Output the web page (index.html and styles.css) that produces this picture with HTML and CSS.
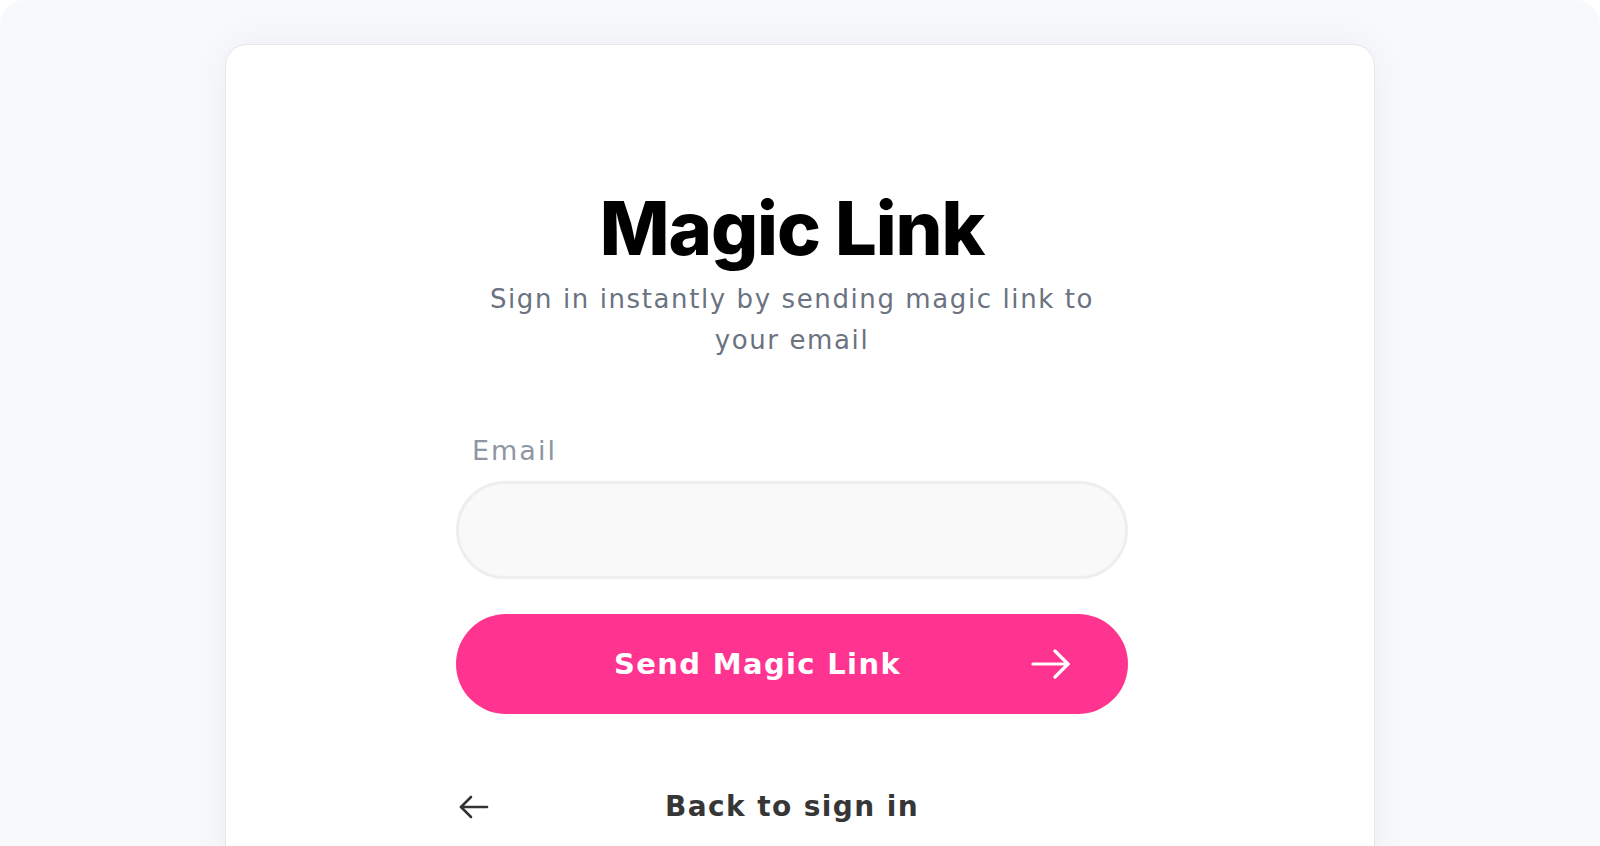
FILE: index.html
```html
<!DOCTYPE html>
<html lang="en">
<head>
    <meta charset="UTF-8">
    <meta name="viewport" content="width=device-width, initial-scale=1.0">
    <title>Magic Link</title>
    <link rel="stylesheet" href="styles.css">
</head>
<body>
    <div class="frame">
        <main class="card">
            <div class="form">
                <h1 class="title">Magic Link</h1>
                <p class="subtitle">Sign in instantly by sending magic link to<br>your email</p>

                <label class="label" for="email">Email</label>
                <input class="input" id="email" type="email">

                <button class="btn" type="button">
                    <span class="btn-text">Send Magic Link</span>
                    <svg class="btn-arrow" width="40" height="30" viewBox="0 0 40 30" fill="none" stroke="#fff" stroke-width="3.2" stroke-linecap="round" stroke-linejoin="round">
                        <path d="M2 15H37"/>
                        <path d="M24 2L37 15L24 28"/>
                    </svg>
                </button>

                <a class="back" href="#">
                    <svg class="back-arrow" width="30" height="24" viewBox="0 0 30 24" fill="none" stroke="#333" stroke-width="2.6" stroke-linecap="round" stroke-linejoin="round">
                        <path d="M28 12H2"/>
                        <path d="M12 2L2 12L12 22"/>
                    </svg>
                    <span class="back-text">Back to sign in</span>
                    <span></span>
                </a>
            </div>
        </main>
    </div>
</body>
</html>
```

FILE: styles.css
```css
html, body {
    margin: 0;
    padding: 0;
    height: 100%;
    overflow: hidden;
    background-color: #fff;
}
body {
    font-family: "DejaVu Sans", Verdana, sans-serif;
}
.frame {
    background-color: #f8f9fb;
    border-radius: 24px;
    height: 1200px;
    padding-top: 44px;
    box-sizing: border-box;
    display: flex;
    justify-content: center;
}
.card {
    width: 1150px;
    height: 1100px;
    box-sizing: border-box;
    background-color: #fff;
    border: 1px solid #e6e7eb;
    border-radius: 22px;
    box-shadow: 0 0 40px rgba(30, 40, 70, 0.05);
    display: flex;
    justify-content: center;
    padding-right: 16px;
    padding-top: 146px;
}
.form {
    width: 672px;
    display: flex;
    flex-direction: column;
}
.title {
    margin: 0;
    font-family: Inter, "Liberation Sans", sans-serif;
    font-weight: 800;
    font-size: 74px;
    line-height: 74px;
    letter-spacing: -0.015em;
    color: #000;
    text-align: center;
}
.subtitle {
    margin: 14px 0 0;
    font-size: 26px;
    line-height: 41px;
    letter-spacing: 1.6px;
    color: #6b7280;
    text-align: center;
}
.label {
    margin-top: 74px;
    margin-left: 16px;
    font-size: 27px;
    line-height: 32px;
    letter-spacing: 2px;
    color: #8e96a3;
}
.input {
    margin-top: 14px;
    height: 98px;
    box-sizing: border-box;
    border: 3px solid #eeeeee;
    border-radius: 49px;
    background-color: #f9f9f9;
    outline: none;
    padding: 0 32px;
    font-size: 26px;
}
.btn {
    margin-top: 35px;
    height: 100px;
    border: none;
    border-radius: 50px;
    background-color: #ff3491;
    color: #fff;
    display: flex;
    align-items: center;
    padding: 0 57px;
    gap: 29px;
    cursor: pointer;
    font-family: "DejaVu Sans", Verdana, sans-serif;
}
.btn-text {
    flex: 1;
    text-align: center;
    font-size: 29px;
    font-weight: 700;
    letter-spacing: 1.35px;
}
.btn-arrow {
    flex: none;
}
.back {
    margin-top: 76px;
    display: grid;
    grid-template-columns: 1fr auto 1fr;
    align-items: center;
    text-decoration: none;
    color: #363636;
}
.back-arrow {
    margin-left: 3px;
}
.back-text {
    font-size: 28px;
    font-weight: 700;
    letter-spacing: 1.4px;
}
```
